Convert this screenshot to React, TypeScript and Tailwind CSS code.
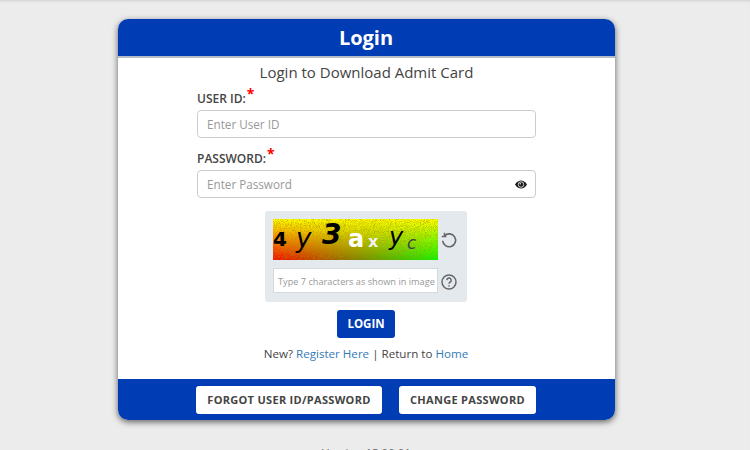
import React from "react";

function CaptchaNoise() {
  return (
    <svg className="absolute inset-0 h-full w-full" width="165" height="41">
      <filter id="grain">
        <feTurbulence type="fractalNoise" baseFrequency="1.2" numOctaves="2" seed="4" />
        <feColorMatrix type="matrix" values="0 0 0 0 0.4  0 0 0 0 0.3  0 0 0 0 0  1.8 0 0 0 -0.75" />
      </filter>
      <rect width="165" height="41" filter="url(#grain)" />
    </svg>
  );
}

export default function App() {
  return (
    <div className="h-[450px] w-[750px] overflow-hidden bg-[#ececec] font-['Open_Sans',sans-serif] text-[#444] shadow-[inset_0_3px_3px_-2px_rgba(0,0,0,0.12)]">
      <div className="flex w-[733px] flex-col items-center pt-[19px]">
        <div className="w-[497px] overflow-hidden rounded-[10px] bg-white shadow-[0_2px_6px_rgba(0,0,0,0.6)]">
          <div className="h-[39px] border-b-2 border-[#b5bcc9] bg-[#003cb3] pr-[1px] text-center text-[20px] leading-[37px] font-bold text-white">
            Login
          </div>
          <div className="flex flex-col items-center">
            <div className="mt-[4px] text-[15px] leading-[20px] text-[#444]">Login to Download Admit Card</div>
            <div className="mt-[8px] w-[339px]">
              <label className="block h-[20px] text-[12px] leading-[18px] font-semibold text-[#444]">
                USER ID:<span className="relative top-[-4px] ml-[1px] text-[14px] leading-none font-bold text-[#f00]">*</span>
              </label>
              <div className="flex h-[28px] items-center rounded-[4px] border border-[#ccc] pt-[1px] pl-[9px] text-[11.7px] text-[#999]">
                Enter User ID
              </div>
              <label className="mt-[12px] block h-[20px] text-[12px] leading-[18px] font-semibold text-[#444]">
                PASSWORD:<span className="relative top-[-4px] ml-[1px] text-[14px] leading-none font-bold text-[#f00]">*</span>
              </label>
              <div className="flex h-[28px] items-center justify-between rounded-[4px] border border-[#ccc] pt-[1px] pr-[8px] pl-[9px] text-[11.7px] text-[#999]">
                Enter Password
                <svg width="12" height="9" viewBox="0 0 24 18">
                  <path d="M0 9C4 3 8 1 12 1s8 2 12 8c-4 6-8 8-12 8S4 15 0 9z" fill="#1a1a1a" />
                  <circle cx="12" cy="9" r="5.5" fill="#1a1a1a" stroke="#fff" strokeWidth="1.6" />
                  <circle cx="10.5" cy="7.5" r="1.4" fill="#fff" />
                </svg>
              </div>
            </div>
            <div className="mt-[13px] mr-[1px] grid h-[91px] w-[202px] grid-cols-[165px_29px] content-start gap-y-[8px] rounded-[3px] bg-[#e4e9ed] py-[8px] pl-[8px]">
              <div className="relative h-[41px] w-[165px] overflow-hidden bg-[linear-gradient(to_bottom,#ffff00,rgba(255,255,0,0)),linear-gradient(to_right,#ff0000,#00ff00)] font-['DejaVu_Sans',sans-serif] text-black">
                <CaptchaNoise />
                <span className="absolute top-[8px] left-0 text-[20px] leading-[24px] font-bold">4</span>
                <span className="absolute top-[4px] left-[23px] text-[26px] leading-[30px] italic">y</span>
                <span className="absolute top-[1px] left-[49px] text-[28px] leading-[30px] font-bold italic">3</span>
                <span className="absolute top-[6px] left-[75px] text-[24px] leading-[28px] font-bold text-white">a</span>
                <span className="absolute top-[13px] left-[95px] text-[16px] leading-[20px] font-bold text-[#f2f2f2]">x</span>
                <span className="absolute top-[4px] left-[116px] text-[24px] leading-[28px] italic">y</span>
                <span className="absolute top-[14px] left-[134px] text-[17px] leading-[20px] text-[#444] italic">c</span>
              </div>
              <div className="flex items-center justify-start pl-[2px]">
                <svg width="18" height="18" viewBox="0 0 24 24" fill="none" stroke="#666" strokeWidth="2.2">
                  <path d="M6 6.4A8.6 8.6 0 1 1 3.6 13" />
                  <path d="M2.4 7.2h6M6 7.2V2.4" strokeWidth="2" />
                </svg>
              </div>
              <div className="flex h-[25px] items-center border border-[#d5d8dc] bg-white pt-[2px] pl-[4px] text-[9.2px] whitespace-nowrap text-[#999]">
                Type 7 characters as shown in image
              </div>
              <div className="flex items-center justify-start pt-[2px] pl-[3px]">
                <svg width="16" height="16" viewBox="0 0 24 24" fill="none" stroke="#666" strokeWidth="2.2">
                  <circle cx="12" cy="12" r="10.5" />
                  <path d="M8.8 9.2a3.2 3.2 0 1 1 4.6 3c-1 .6-1.4 1.2-1.4 2.3" />
                  <path d="M12 16.8v1.8" />
                </svg>
              </div>
            </div>
            <div className="mt-[8px] mr-[1px] flex h-[28px] w-[58px] items-center justify-center rounded-[3px] bg-[#003cb3] text-[11.5px] font-bold text-white">
              LOGIN
            </div>
            <div className="mt-[7px] mr-[1px] text-[11.6px] leading-[18px] text-[#444]">
              New? <span className="text-[#337ab7]">Register Here</span> | Return to{" "}
              <span className="text-[#337ab7]">Home</span>
            </div>
          </div>
          <div className="mt-[16px] flex h-[41px] items-start justify-center gap-[17px] bg-[#003cb3] pt-[7px] pr-[1px]">
            <div className="flex h-[28px] w-[186px] items-center justify-center rounded-[3px] bg-white text-[11px] font-bold tracking-[0.3px] text-[#444]">
              FORGOT USER ID/PASSWORD
            </div>
            <div className="flex h-[28px] w-[137px] items-center justify-center rounded-[3px] bg-white text-[11px] font-bold tracking-[0.3px] text-[#444]">
              CHANGE PASSWORD
            </div>
          </div>
        </div>
        <div className="mt-[24px] text-[11.5px] text-[#666]">Version 15.00.01</div>
      </div>
    </div>
  );
}
